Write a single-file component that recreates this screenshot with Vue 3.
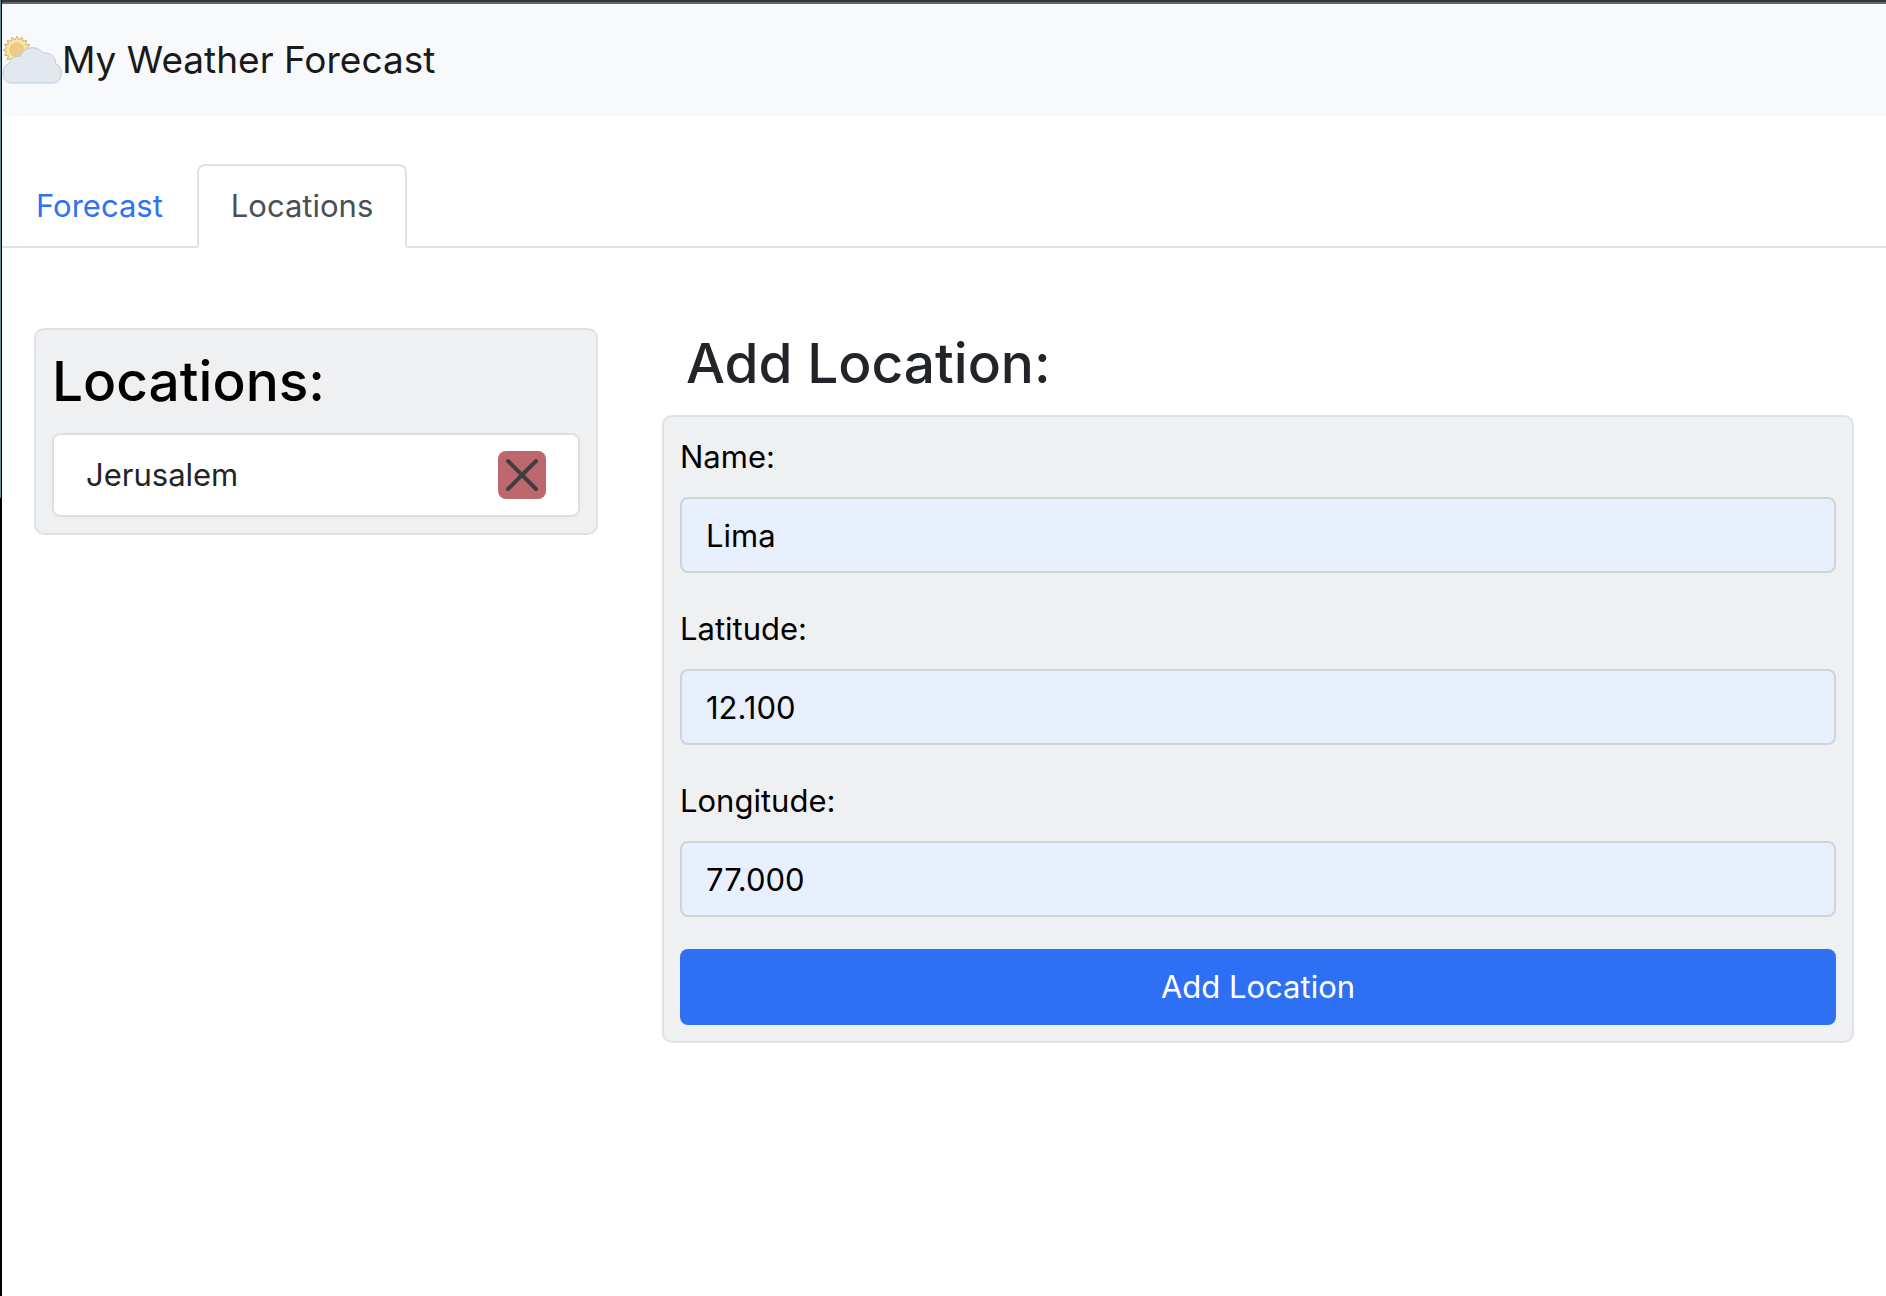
<script setup>
import { ref, reactive } from 'vue'

const tabs = ['Forecast', 'Locations']
const activeTab = ref('Locations')
const locations = ref(['Jerusalem'])
const fields = [
  { id: 'name', label: 'Name:' },
  { id: 'latitude', label: 'Latitude:' },
  { id: 'longitude', label: 'Longitude:' }
]
const form = reactive({ name: 'Lima', latitude: '12.100', longitude: '77.000' })

// Star outline for the sun: alternating outer and inner points.
const sunPoints = Array.from({ length: 32 }, (_, i) => {
  const r = i % 2 ? 31 : 41
  const a = (i * Math.PI) / 16 - Math.PI / 2
  return `${(45 + r * Math.cos(a)).toFixed(1)},${(60 + r * Math.sin(a)).toFixed(1)}`
}).join(' ')

function addLocation() {
  if (form.name) locations.value.push(form.name)
}
function removeLocation(index) {
  locations.value.splice(index, 1)
}
</script>

<template>
  <div class="window">
    <header class="navbar">
      <a class="brand" href="#">
        <svg class="logo" viewBox="0 0 180 180" aria-hidden="true">
          <polygon :points="sunPoints" fill="#fbe6a2" stroke="#cfae72" stroke-width="3" />
          <circle cx="45" cy="60" r="23" fill="#eccb88" />
          <path
            d="M28 159 C12 159 3 145 3 129 C3 114 11 104 22 100 C24 86 37 77 55 79 C61 62 75 53 91 53 C105 53 116 59 122 69 C143 66 162 80 161 101 C172 105 178 115 178 129 C178 146 168 159 151 159 Z"
            fill="#e1e8ef"
            stroke="#bfccd8"
            stroke-width="3"
          />
        </svg>
        <span>My Weather Forecast</span>
      </a>
    </header>

    <nav class="tabs">
      <button
        v-for="tab in tabs"
        :key="tab"
        type="button"
        class="tab"
        :class="{ active: tab === activeTab }"
        @click="activeTab = tab"
      >
        {{ tab }}
      </button>
    </nav>

    <main class="row">
      <section class="col">
        <div class="card">
          <h2 class="card-title">Locations:</h2>
          <ul class="list">
            <li v-for="(name, index) in locations" :key="name" class="item">
              <span>{{ name }}</span>
              <button type="button" class="remove" :aria-label="`Remove ${name}`" @click="removeLocation(index)">
                <svg viewBox="0 0 48 48" aria-hidden="true">
                  <path d="M10 10 38 38M38 10 10 38" stroke="#3f3f41" stroke-width="4" stroke-linecap="round" />
                </svg>
              </button>
            </li>
          </ul>
        </div>
      </section>

      <section class="col">
        <h2 class="form-title">Add Location:</h2>
        <form class="card form" @submit.prevent="addLocation">
          <div v-for="field in fields" :key="field.id" class="field">
            <label :for="field.id">{{ field.label }}</label>
            <input :id="field.id" v-model="form[field.id]" type="text" />
          </div>
          <button type="submit" class="submit">Add Location</button>
        </form>
      </section>
    </main>
  </div>
</template>

<style>
body {
  margin: 0;
  background: #fff;
}
</style>

<style scoped>
* {
  box-sizing: border-box;
}
.window {
  min-height: 100vh;
  padding: 4px 0 0 2px;
  font-family: Inter, "Liberation Sans", sans-serif;
  font-size: 31px;
  line-height: 48px;
  color: #212529;
  background:
    linear-gradient(#35363b 2px, #636468 2px) 2px 0 / 100% 4px no-repeat,
    linear-gradient(#5f8f9e, #5f8f9e) 0 0 / 1px 498px no-repeat,
    linear-gradient(#000, #000) 0 0 / 2px 100% no-repeat,
    #fff;
}
button,
input {
  font: inherit;
}
.navbar {
  padding: 16px 0;
  background: #f8f9fb;
}
.brand {
  display: inline-flex;
  align-items: center;
  height: 80px;
  vertical-align: top;
  font-size: 37px;
  line-height: 60px;
  color: #1a1a1b;
  text-decoration: none;
}
.logo {
  width: 60px;
  height: 60px;
}
.tabs {
  display: flex;
  margin-top: 48px;
  border-bottom: 2px solid #dee2e6;
}
.tab {
  margin-bottom: -2px;
  padding: 16px 32px;
  border: 2px solid transparent;
  border-radius: 8px 8px 0 0;
  background: transparent;
  color: #2e72f6;
  cursor: pointer;
}
.tab.active {
  border-color: #dee2e6 #dee2e6 #fff;
  background: #fff;
  color: #495057;
}
.row {
  display: grid;
  grid-template-columns: minmax(0, 1fr) minmax(0, 2fr);
  margin-top: 80px;
}
.col {
  padding: 0 32px;
}
.card {
  padding: 16px;
  border: 2px solid #dee2e6;
  border-radius: 10px;
  background: #eff0f2;
  color: #000;
}
.card-title,
.form-title {
  margin: 0 0 16px;
  font-size: 55px;
  font-weight: 500;
  line-height: 71px;
}
.form-title {
  padding-left: 24px;
}
.list {
  margin: 0;
  padding: 0;
  list-style: none;
}
.item {
  display: flex;
  align-items: center;
  justify-content: space-between;
  padding: 16px 32px;
  border: 2px solid #dfdfdf;
  border-radius: 8px;
  background: #fff;
  color: #212529;
}
.remove {
  width: 48px;
  height: 48px;
  padding: 0;
  border: 0;
  border-radius: 8px;
  background: #be676e;
  cursor: pointer;
}
.remove svg {
  display: block;
}
.form {
  display: flex;
  flex-direction: column;
  gap: 32px;
}
.field {
  display: flex;
  flex-direction: column;
  gap: 16px;
}
.field input {
  width: 100%;
  height: 76px;
  padding: 12px 24px;
  border: 2px solid #ced4da;
  border-radius: 8px;
  background: #e8effd;
  color: #000;
}
.submit {
  height: 76px;
  padding: 12px 24px;
  border: 0;
  border-radius: 8px;
  background: #2e70f4;
  color: #fff;
  cursor: pointer;
}
</style>
